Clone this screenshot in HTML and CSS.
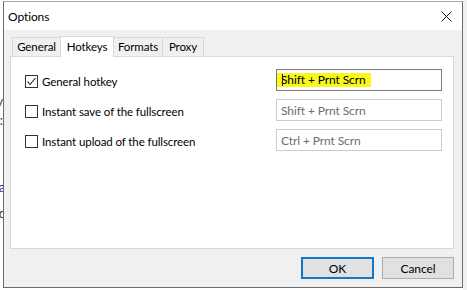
FILE: index.html
```html
<!DOCTYPE html>
<html>
<head>
<meta charset="utf-8">
<link rel="stylesheet" href="styles.css">
</head>
<body>
<div class="desk">
  <div class="behind">
    <span class="frag f1">y</span>
    <span class="frag f2">:</span>
    <span class="frag f3">a</span>
    <span class="frag f4">d</span>
  </div>
  <div class="dialog">
    <div class="titlebar">
      <span class="title">Options</span>
      <svg class="close" width="11" height="11" viewBox="0 0 11 11"><path d="M0.5 0.5 L10.5 10.5 M10.5 0.5 L0.5 10.5" stroke="#111" stroke-width="1" fill="none"/></svg>
    </div>
    <div class="body">
      <div class="tabs">
        <div class="tab t-general">General</div>
        <div class="tab t-hotkeys active">Hotkeys</div>
        <div class="tab t-formats">Formats</div>
        <div class="tab t-proxy">Proxy</div>
      </div>
      <div class="panel">
        <div class="row">
          <label class="check"><span class="box checked"><svg width="11" height="11" viewBox="0 0 11 11"><path d="M1.5 5.5 L4 8.5 L9.5 2" stroke="#222" stroke-width="1.1" fill="none"/></svg></span>General hotkey</label>
          <div class="field focus"><span class="hl">Shift + Prnt Scrn</span><span class="caret"></span></div>
        </div>
        <div class="row">
          <label class="check"><span class="box"></span>Instant save of the fullscreen</label>
          <div class="field dim">Shift + Prnt Scrn</div>
        </div>
        <div class="row">
          <label class="check"><span class="box"></span>Instant upload of the fullscreen</label>
          <div class="field dim">Ctrl + Prnt Scrn</div>
        </div>
      </div>
      <div class="buttons">
        <div class="btn default">OK</div>
        <div class="btn cancel">Cancel</div>
      </div>
    </div>
  </div>
</div>
</body>
</html>
```
FILE: styles.css
```css
* { box-sizing: border-box; }
html, body {
  margin: 0;
  padding: 0;
  width: 467px;
  height: 290px;
  overflow: hidden;
  background: #ffffff;
  font-family: "Lato", "Segoe UI", sans-serif;
  font-size: 11.5px;
  letter-spacing: -0.1px;
  color: #000;
}
.desk {
  display: flex;
  align-items: flex-start;
  height: 290px;
  background: linear-gradient(to right, #fff 0, #fff 463px, #f0f0f0 463px);
}
.behind {
  position: relative;
  width: 3px;
  height: 290px;
  overflow: hidden;
  background: #fff;
  flex: none;
}
.frag {
  position: absolute;
  right: 0;
  font-size: 13px;
  color: #444;
  line-height: 14px;
}
.f1 { top: 94px; }
.f2 { top: 113px; }
.f3 { top: 180px; color: #2b2b8c; right: -2px; }
.f4 { top: 206px; right: -3px; }
.dialog {
  margin-top: 1px;
  width: 460px;
  height: 287px;
  border: 1px solid #6b6b6b;
  border-top-color: #a9a9a9;
  background: #f0f0f0;
  display: flex;
  flex-direction: column;
  flex: none;
}
.titlebar {
  height: 28px;
  flex: none;
  background: #fff;
  display: flex;
  align-items: center;
  justify-content: space-between;
  padding: 0 10px 0 4px;
}
.title { font-size: 12px; }
.body {
  flex: 1;
  padding: 6px 8px 0 6px;
  display: flex;
  flex-direction: column;
}
.tabs {
  display: flex;
  padding-left: 2px;
  height: 20px;
  flex: none;
  align-items: flex-end;
  position: relative;
  z-index: 1;
}
.tab {
  height: 19px;
  line-height: 18px;
  text-align: center;
  border: 1px solid #d9d9d9;
  border-bottom: none;
  background: #f0f0f0;
  margin-right: -1px;
}
.t-general { width: 49px; }
.t-hotkeys { width: 54px; }
.t-formats { width: 50px; }
.t-proxy { width: 42px; }
.tab.active {
  height: 21px;
  line-height: 19px;
  background: #fff;
  margin-bottom: -1px;
  position: relative;
  z-index: 2;
}
.panel {
  height: 193px;
  flex: none;
  background: #fff;
  border: 1px solid #d9d9d9;
  padding: 12px 11px 0 14px;
  display: flex;
  flex-direction: column;
  gap: 8px;
}
.row {
  display: flex;
  justify-content: space-between;
  align-items: center;
  height: 22px;
}
.check {
  display: flex;
  align-items: center;
  gap: 4px;
  position: relative;
  top: 1px;
}
.box {
  width: 13px;
  height: 13px;
  border: 1px solid #333;
  background: #fff;
  display: flex;
  align-items: center;
  justify-content: center;
}
.field {
  width: 166px;
  height: 22px;
  border: 1px solid #cccccc;
  background: #fff;
  display: flex;
  align-items: center;
  padding-left: 4px;
  position: relative;
  color: #6d6d6d;
  font-size: 12px;
  letter-spacing: -0.1px;
}
.field.focus {
  border-color: #7a7a7a;
  padding-left: 0;
  color: #000;
}
.hl {
  background: #f8f81c;
  padding: 0 5px 0 4px;
  line-height: 14px;
}
.caret {
  position: absolute;
  left: 5px;
  top: 4px;
  width: 1px;
  height: 12px;
  background: #222;
}
.buttons {
  display: flex;
  justify-content: flex-end;
  gap: 8px;
  margin-top: 8px;
}
.btn {
  height: 22px;
  border: 1px solid #adadad;
  background: #e1e1e1;
  display: flex;
  align-items: center;
  justify-content: center;
  font-size: 12px;
}
.btn.default {
  width: 73px;
  border: 2px solid #0f78c8;
}
.btn.cancel { width: 72px; }
```
